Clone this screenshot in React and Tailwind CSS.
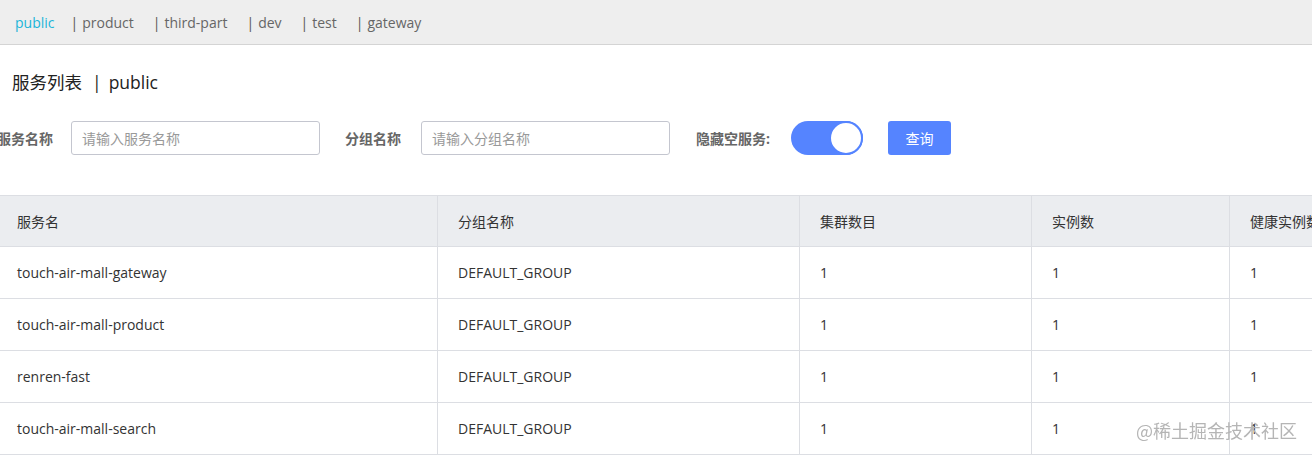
import React from "react";

const font = { fontFamily: '"Open Sans", "Noto Sans CJK SC", sans-serif' };

const tabs = ["public", "product", "third-part", "dev", "test", "gateway"];
const rows = [
  "touch-air-mall-gateway",
  "touch-air-mall-product",
  "renren-fast",
  "touch-air-mall-search",
];

export default function App() {
  return (
    <div className="w-[1312px] h-[455px] overflow-hidden bg-white text-[#333]" style={font}>
      <div className="h-[45px] bg-[#eeeeee] border-b border-[#d4d4d4] flex items-center pl-[15px] text-[14px] text-[#666]">
        {tabs.map((t, i) => (
          <span key={t} className={i === 0 ? "text-[#20b5d9] mr-[16px]" : "mr-[19px]"}>
            {i > 0 && <span className="mr-[4px] text-[#555]">|</span>}
            {t}
          </span>
        ))}
      </div>
      <div className="h-[76px] flex items-center pl-[12px] pb-[2px] text-[17.5px] text-[#222]">
        <span>服务列表</span>
        <span className="ml-[10px] mr-[7px]">|</span>
        <span>public</span>
      </div>
      <div className="flex items-center h-[34px] ml-[-3px] text-[14px]">
        <span className="font-bold text-[#666] w-[74px]">服务名称</span>
        <div className="w-[249px] h-[34px] border border-[#c4c6cf] rounded-[3px] flex items-center px-[10px] text-[#999]">请输入服务名称</div>
        <span className="font-bold text-[#666] ml-[25px] w-[76px]">分组名称</span>
        <div className="w-[249px] h-[34px] border border-[#c4c6cf] rounded-[3px] flex items-center px-[10px] text-[#999]">请输入分组名称</div>
        <span className="font-bold text-[#666] ml-[26px] w-[95px]">隐藏空服务:</span>
        <div className="w-[72px] h-[34px] rounded-full bg-[#5584ff] relative">
          <div className="absolute right-0 top-0 w-[34px] h-[34px] rounded-full bg-white border-2 border-[#5584ff]"></div>
        </div>
        <button className="ml-[25px] w-[63px] h-[34px] rounded-[3px] bg-[#5584ff] text-white text-[14px]">查询</button>
      </div>
      <div className="mt-[40px] text-[14px]">
        <div className="flex h-[52px] bg-[#ebedf0] border-t border-b border-[#dcdee3] text-[#333]">
          <div className="w-[438px] shrink-0 border-r border-[#dcdee3] flex items-center pl-[17px]">服务名</div>
          <div className="w-[362px] shrink-0 border-r border-[#dcdee3] flex items-center pl-[20px]">分组名称</div>
          <div className="w-[232px] shrink-0 border-r border-[#dcdee3] flex items-center pl-[20px]">集群数目</div>
          <div className="w-[198px] shrink-0 border-r border-[#dcdee3] flex items-center pl-[20px]">实例数</div>
          <div className="flex-1 flex items-center pl-[20px] whitespace-nowrap overflow-hidden">健康实例数</div>
        </div>
        {rows.map((r) => (
          <div key={r} className="flex h-[52px] border-b border-[#dcdee3] text-[#333]">
            <div className="w-[438px] shrink-0 border-r border-[#dcdee3] flex items-center pl-[17px]">{r}</div>
            <div className="w-[362px] shrink-0 border-r border-[#dcdee3] flex items-center pl-[20px]">DEFAULT_GROUP</div>
            <div className="w-[232px] shrink-0 border-r border-[#dcdee3] flex items-center pl-[20px]">1</div>
            <div className="w-[198px] shrink-0 border-r border-[#dcdee3] flex items-center pl-[20px]">1</div>
            <div className="flex-1 flex items-center pl-[20px]">1</div>
          </div>
        ))}
      </div>
      <div className="fixed left-[1136px] top-[417px] text-[18px] text-[#b5b5b5]" style={{ fontFamily: '"Noto Sans CJK SC", sans-serif' }}>
        @稀土掘金技术社区
      </div>
    </div>
  );
}
